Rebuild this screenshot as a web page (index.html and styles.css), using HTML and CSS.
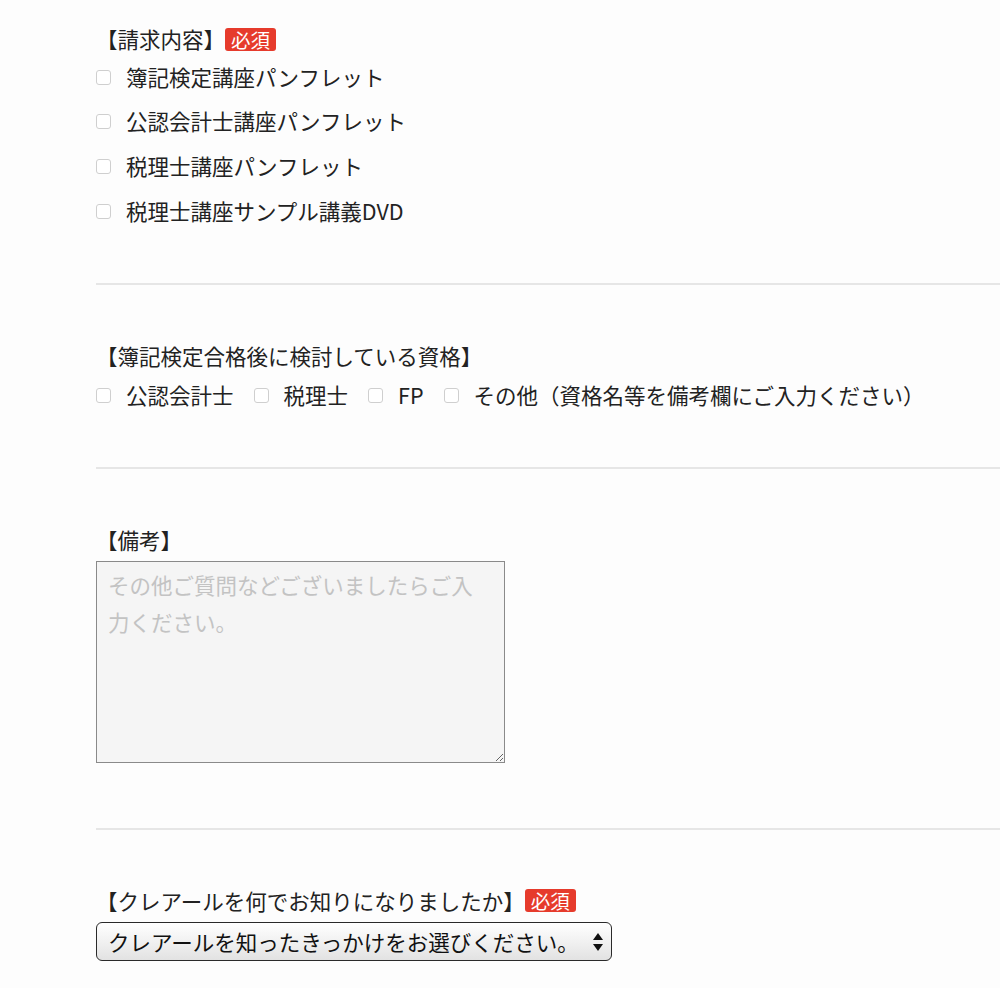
FILE: index.html
```html
<!DOCTYPE html>
<html lang="ja">
<head>
  <meta charset="UTF-8" />
  <meta name="viewport" content="width=device-width, initial-scale=1.0" />
  <title>資料請求フォーム</title>
  <link rel="stylesheet" href="styles.css">
</head>
<body>
  <form class="form">
    <div class="field field-first">
      <div class="field-title">【請求内容】<span class="badge">必須</span></div>
      <ul class="check-list">
        <li><label><input type="checkbox" name="item" value="boki"><span>簿記検定講座パンフレット</span></label></li>
        <li><label><input type="checkbox" name="item" value="cpa"><span>公認会計士講座パンフレット</span></label></li>
        <li><label><input type="checkbox" name="item" value="tax"><span>税理士講座パンフレット</span></label></li>
        <li><label><input type="checkbox" name="item" value="dvd"><span>税理士講座サンプル講義DVD</span></label></li>
      </ul>
    </div>
    <hr class="divider">
    <div class="field field-second">
      <div class="field-title">【簿記検定合格後に検討している資格】</div>
      <div class="check-row">
        <label><input type="checkbox" name="next" value="cpa"><span>公認会計士</span></label>
        <label><input type="checkbox" name="next" value="tax"><span>税理士</span></label>
        <label><input type="checkbox" name="next" value="fp"><span>FP</span></label>
        <label><input type="checkbox" name="next" value="other"><span>その他（資格名等を備考欄にご入力ください）</span></label>
      </div>
    </div>
    <hr class="divider">
    <div class="field field-third">
      <div class="field-title">【備考】</div>
      <textarea class="memo" placeholder="その他ご質問などございましたらご入力ください。"></textarea>
    </div>
    <hr class="divider">
    <div class="field field-fourth">
      <div class="field-title">【クレアールを何でお知りになりましたか】<span class="badge">必須</span></div>
      <div class="select-wrap">
        <select class="select">
          <option>クレアールを知ったきっかけをお選びください。</option>
        </select>
        <svg class="select-arrows" width="12" height="20" viewBox="0 0 12 20">
          <path d="M6 1 L11 8 L1 8 Z" fill="#111"/>
          <path d="M1 12 L11 12 L6 19 Z" fill="#111"/>
        </svg>
      </div>
    </div>
  </form>
</body>
</html>
```

FILE: styles.css
```css
* {
  box-sizing: border-box;
  margin: 0;
  padding: 0;
}
body {
  background-color: #fdfdfd;
  color: #222;
  font-family: "Noto Sans CJK JP", "Liberation Sans", sans-serif;
  font-size: 21.5px;
}
.form {
  padding-left: 96px;
}
.divider {
  height: 2px;
  border: 0;
  background-color: #e6e6e6;
}
.field {
  padding: 56px 0 50px;
}
.field-first {
  padding-top: 24px;
}
.field-second {
  padding-bottom: 48px;
}
.field-third {
  padding-bottom: 65px;
}
.field-fourth {
  padding-bottom: 27px;
}
.field-title {
  display: flex;
  align-items: center;
  height: 30px;
  line-height: 30px;
}
.badge {
  display: inline-block;
  margin-left: 0;
  padding: 0 6px;
  height: 23px;
  line-height: 23px;
  font-size: 19.5px;
  color: #fff;
  background-color: #e63b2c;
  border-radius: 3px;
}
.check-list {
  list-style: none;
}
.check-list li {
  display: flex;
  align-items: center;
  height: 44.67px;
}
label {
  display: flex;
  align-items: center;
}
input[type="checkbox"] {
  appearance: none;
  width: 15px;
  height: 15px;
  margin: 2px 15px 0 0;
  background-color: #fff;
  border: 1px solid #cfcfcf;
  border-radius: 3px;
  flex-shrink: 0;
}
.check-row {
  display: flex;
  align-items: center;
  gap: 20px;
  height: 48px;
}
.memo {
  display: block;
  width: 409px;
  height: 202px;
  margin-top: 6px;
  padding: 4px 11px;
  font-family: inherit;
  font-size: 21.5px;
  line-height: 37px;
  color: #222;
  background-color: #f5f5f5;
  border: 1px solid #8a8a8a;
}
.memo::placeholder {
  color: #c3c3c3;
}
.select-wrap {
  position: relative;
  width: 516px;
  margin-top: 6px;
}
.select {
  appearance: none;
  display: block;
  width: 100%;
  height: 39px;
  padding: 0 40px 0 11px;
  font-family: inherit;
  font-size: 21.5px;
  color: #111;
  background: linear-gradient(#ffffff, #f1f1f1 50%, #e2e2e2);
  border: 1px solid #2a2a2a;
  border-radius: 6px;
}
.select-arrows {
  position: absolute;
  right: 8px;
  top: 10px;
  pointer-events: none;
}
```
